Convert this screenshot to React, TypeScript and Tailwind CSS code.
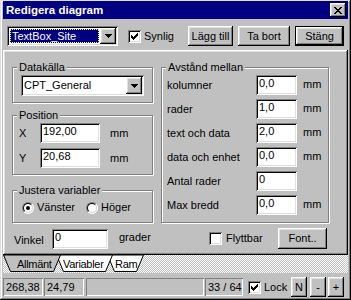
import React from 'react';

const raised = 'shadow-[inset_-1px_-1px_#000,inset_1px_1px_#fff,inset_-2px_-2px_#808080,inset_2px_2px_#dfdfdf]';
const sunken = 'shadow-[inset_1px_1px_#808080,inset_-1px_-1px_#fff,inset_2px_2px_#000,inset_-2px_-2px_#dfdfdf]';
const thin = 'shadow-[inset_1px_1px_#808080,inset_-1px_-1px_#fff]';

function Arrow() {
  return (
    <svg width="7" height="4" viewBox="0 0 7 4" shapeRendering="crispEdges">
      <path d="M0 0h7v1H0z M1 1h5v1H1z M2 2h3v1H2z M3 3h1v1H3z" fill="#000" />
    </svg>
  );
}

function Check({ checked, className = '' }: { checked: boolean; className?: string }) {
  return (
    <div className={`w-[13px] h-[13px] shrink-0 bg-white ${sunken} flex items-center justify-center ${className}`}>
      {checked && (
        <svg width="7" height="7" viewBox="0 0 7 7" shapeRendering="crispEdges">
          <path
            d="M6 0h1v1H6z M5 1h2v1H5z M0 2h1v1H0z M4 2h3v1H4z M0 3h2v1H0z M3 3h3v1H3z M0 4h5v1H0z M1 5h3v1H1z M2 6h1v1H2z"
            fill="#000"
          />
        </svg>
      )}
    </div>
  );
}

function Radio({ on }: { on: boolean }) {
  return (
    <div className="w-[12px] h-[12px] shrink-0 rounded-full border border-t-[#808080] border-l-[#808080] border-r-white border-b-white">
      <div className="w-full h-full rounded-full bg-white border border-t-black border-l-black border-r-[#dfdfdf] border-b-[#dfdfdf] flex items-center justify-center">
        {on && <div className="w-[4px] h-[4px] rounded-full bg-black" />}
      </div>
    </div>
  );
}

function Btn({ className = '', children }: { className?: string; children: React.ReactNode }) {
  return (
    <div className={`h-[20px] shrink-0 bg-[#c0c0c0] ${raised} flex items-center justify-center ${className}`}>
      {children}
    </div>
  );
}

function Field({ className = '', value }: { className?: string; value: string }) {
  return (
    <div className={`h-[20px] shrink-0 bg-white ${sunken} pl-[3px] pt-[2px] leading-[13px] ${className}`}>{value}</div>
  );
}

function Group({ label, className = '', children }: { label: string; className?: string; children?: React.ReactNode }) {
  return (
    <div className={`relative shrink-0 border border-[#808080] shadow-[inset_1px_1px_#fff,1px_1px_#fff] ${className}`}>
      <span className="absolute -top-[8px] left-[4px] px-[2px] bg-[#c0c0c0] leading-[14px]">{label}</span>
      {children}
    </div>
  );
}

function Row({ label, value, unit }: { label: string; value: string; unit?: boolean }) {
  return (
    <div className="h-[20px] flex items-center">
      <span className="w-[89px] shrink-0">{label}</span>
      <Field className="w-[41px]" value={value} />
      {unit && <span className="ml-[6px] -mt-[2px]">mm</span>}
    </div>
  );
}

export default function App() {
  return (
    <div className="w-[351px] h-[300px] overflow-hidden bg-[#c0c0c0] flex flex-col pt-[1px] px-[3px] font-['Liberation_Sans',Arial,sans-serif] text-[11px] leading-[13px] text-black shadow-[inset_-1px_-1px_#000,inset_1px_1px_#dfdfdf,inset_-2px_-2px_#808080,inset_2px_2px_#fff] select-none">
      {/* title bar */}
      <div className="h-[18px] shrink-0 bg-[#000080] flex items-center pl-[3px] pr-[2px]">
        <span className="text-white font-bold text-[11.5px]">Redigera diagram</span>
        <div className={`ml-auto w-[16px] h-[14px] bg-[#c0c0c0] ${raised} flex items-center justify-center`}>
          <svg width="8" height="7" viewBox="0 0 8 7" shapeRendering="crispEdges">
            <path
              d="M0 0h2v1H0z M6 0h2v1H6z M1 1h2v1H1z M5 1h2v1H5z M2 2h4v1H2z M3 3h2v1H3z M2 4h4v1H2z M1 5h2v1H1z M5 5h2v1H5z M0 6h2v1H0z M6 6h2v1H6z"
              fill="#000"
            />
          </svg>
        </div>
      </div>

      {/* top row */}
      <div className="mt-[7px] h-[20px] shrink-0 flex items-center pl-[4px]">
        <div className={`w-[111px] h-[20px] bg-white ${sunken} p-[2px] flex`}>
          <div className="flex-1 m-[1px] bg-[#000080] border border-dotted border-[#ffff60] text-white pl-[1px] leading-[12px]">
            TextBox_Site
          </div>
          <div className={`w-[16px] bg-[#c0c0c0] ${raised} flex items-center justify-center`}>
            <Arrow />
          </div>
        </div>
        <Check checked className="ml-[10px]" />
        <span className="ml-[3px] w-[44px]">Synlig</span>
        <Btn className="w-[45px]">Lägg till</Btn>
        <Btn className="ml-[5px] w-[52px]">Ta bort</Btn>
        <div className="ml-[5px] w-[49px] h-[20px] border border-black">
          <Btn className="w-full h-full">Stäng</Btn>
        </div>
      </div>

      {/* main panel */}
      <div className={`mt-[4px] h-[205px] shrink-0 ${raised} pl-[9px] pt-[17px] flex flex-col`}>
        <div className="flex">
          <div className="w-[141px] flex flex-col">
            <Group label="Datakälla" className="h-[36px] pt-[7px] pl-[8px]">
              <div className={`w-[123px] h-[21px] bg-white ${sunken} p-[2px] flex`}>
                <div className="flex-1 pl-[1px] pt-[2px] leading-[13px]">CPT_General</div>
                <div className={`w-[16px] bg-[#c0c0c0] ${raised} flex items-center justify-center`}>
                  <Arrow />
                </div>
              </div>
            </Group>

            <Group label="Position" className="mt-[12px] h-[60px] pt-[7px] pl-[6px]">
              <div className="h-[20px] flex items-center">
                <span className="w-[21px]">X</span>
                <Field className="w-[60px]" value="192,00" />
                <span className="ml-[10px]">mm</span>
              </div>
              <div className="mt-[5px] h-[20px] flex items-center">
                <span className="w-[21px]">Y</span>
                <Field className="w-[60px]" value="20,68" />
                <span className="ml-[10px]">mm</span>
              </div>
            </Group>

            <Group label="Justera variabler" className="mt-[15px] h-[33px] pt-[10px] pl-[9px]">
              <div className="h-[13px] flex items-center">
                <Radio on />
                <span className="ml-[3px] w-[49px]">Vänster</span>
                <Radio on={false} />
                <span className="ml-[3px]">Höger</span>
              </div>
            </Group>
          </div>

          <Group label="Avstånd mellan" className="ml-[8px] w-[168px] h-[156px] pt-[7px] pl-[5px] flex flex-col gap-[4px]">
            <Row label="kolumner" value="0,0" unit />
            <Row label="rader" value="1,0" unit />
            <Row label="text och data" value="2,0" unit />
            <Row label="data och enhet" value="0,0" unit />
            <Row label="Antal rader" value="0" />
            <Row label="Max bredd" value="0,0" unit />
          </Group>
        </div>

        <div className="mt-[5px] h-[21px] flex items-center pl-[2px]">
          <span className="w-[38px] pt-[4px]">Vinkel</span>
          <Field className="w-[56px]" value="0" />
          <span className="ml-[11px] w-[90px] -mt-[2px]">grader</span>
          <Check checked={false} />
          <span className="ml-[4px] w-[52px]">Flyttbar</span>
          <Btn className="w-[49px] h-[21px]">Font..</Btn>
        </div>
      </div>

      {/* sheet tabs */}
      <div className="h-[18px] shrink-0 flex tracking-[-0.3px] bg-[repeating-conic-gradient(#c0c0c0_0%_25%,#ffffff_0%_50%)] bg-[length:2px_2px]">
        <div className="relative z-30 w-[58px] h-[17px] flex items-center pl-[14px] pt-[1px]">
          <svg className="absolute inset-0" width="58" height="17" viewBox="0 0 58 17">
            <polygon points="0.5,0 7.5,16.5 50.5,16.5 57.5,0" fill="#c0c0c0" stroke="#000" />
          </svg>
          <span className="relative">Allmänt</span>
        </div>
        <div className="relative z-20 -ml-[5px] w-[57px] h-[17px] flex items-center pl-[7px] pt-[1px]">
          <svg className="absolute inset-0" width="57" height="17" viewBox="0 0 57 17">
            <polygon points="0.5,0 7.5,16.5 49.5,16.5 56.5,0" fill="#fff" stroke="#000" />
          </svg>
          <span className="relative">Variabler</span>
        </div>
        <div className="relative z-10 -ml-[6px] w-[37px] h-[17px] flex items-center pl-[8px] pt-[1px]">
          <svg className="absolute inset-0" width="37" height="17" viewBox="0 0 37 17">
            <polygon points="0.5,0 7.5,16.5 29.5,16.5 36.5,0" fill="#fff" stroke="#000" />
          </svg>
          <span className="relative">Ram</span>
        </div>
      </div>

      {/* status bar */}
      <div className="mt-[5px] h-[18px] shrink-0 flex items-stretch">
        <div className={`w-[40px] ${thin} pl-[3px] flex items-center`}>268,38</div>
        <div className={`ml-[1px] w-[40px] ${thin} pl-[3px] flex items-center`}>24,79</div>
        <div className={`ml-[2px] w-[118px] ${thin}`} />
        <div className={`ml-[1px] w-[38px] ${thin} pl-[3px] flex items-center`}>33 / 64</div>
        <Check checked className="ml-[5px] self-center" />
        <span className="ml-[3px] w-[27px] self-center">Lock</span>
        <Btn className="w-[16px] h-[17px] self-center">N</Btn>
        <Btn className="ml-[3px] w-[16px] h-[17px] self-center">-</Btn>
        <Btn className="ml-[2px] w-[16px] h-[17px] self-center">+</Btn>
      </div>
    </div>
  );
}
